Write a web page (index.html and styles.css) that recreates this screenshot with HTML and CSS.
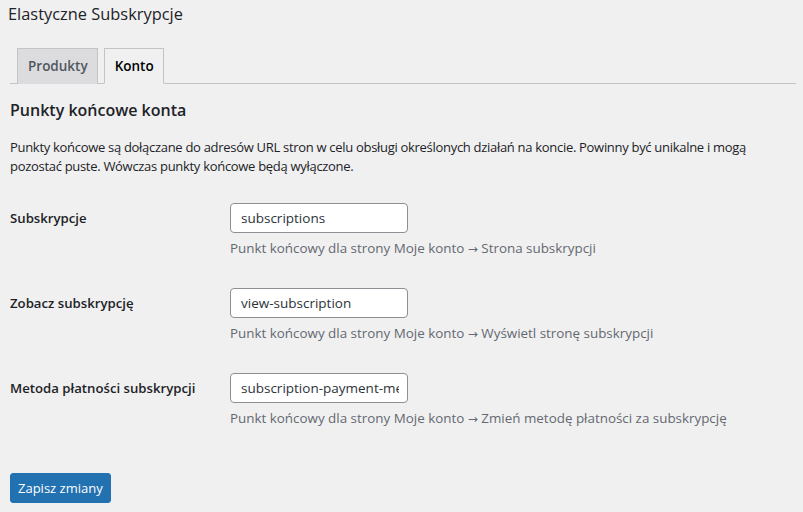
FILE: index.html
```html
<!DOCTYPE html>
<html lang="pl">
<head>
    <meta charset="UTF-8">
    <meta name="viewport" content="width=device-width, initial-scale=1.0">
    <title>Elastyczne Subskrypcje</title>
    <link rel="stylesheet" href="styles.css">
</head>
<body>

    <div class="wrap">
        <h1 class="tytul">Elastyczne Subskrypcje</h1>

        <nav class="zakladki">
            <a class="zakladka" href="#">Produkty</a>
            <a class="zakladka aktywna" href="#">Konto</a>
        </nav>

        <h2 class="sekcja">Punkty końcowe konta</h2>
        <p class="opis">Punkty końcowe są dołączane do adresów URL stron w celu obsługi określonych działań na koncie. Powinny być unikalne i mogą pozostać puste. Wówczas punkty końcowe będą wyłączone.</p>

        <div class="formularz">
            <!-- Subskrypcje -->
            <div class="wiersz">
                <label class="etykieta" for="subskrypcje">Subskrypcje</label>
                <div class="pole">
                    <input type="text" id="subskrypcje" value="subscriptions">
                    <p class="podpowiedz">Punkt końcowy dla strony Moje konto <span class="strzalka">→</span> Strona subskrypcji</p>
                </div>
            </div>

            <!-- Zobacz subskrypcję -->
            <div class="wiersz">
                <label class="etykieta" for="zobacz">Zobacz subskrypcję</label>
                <div class="pole">
                    <input type="text" id="zobacz" value="view-subscription">
                    <p class="podpowiedz">Punkt końcowy dla strony Moje konto <span class="strzalka">→</span> Wyświetl stronę subskrypcji</p>
                </div>
            </div>

            <!-- Metoda płatności -->
            <div class="wiersz">
                <label class="etykieta" for="metoda">Metoda płatności subskrypcji</label>
                <div class="pole">
                    <input type="text" id="metoda" value="subscription-payment-method">
                    <p class="podpowiedz">Punkt końcowy dla strony Moje konto <span class="strzalka">→</span> Zmień metodę płatności za subskrypcję</p>
                </div>
            </div>
        </div>

        <button class="boton">Zapisz zmiany</button>
    </div>

</body>
</html>
```

FILE: styles.css
```css
body {
    font-family: 'Open Sans', 'Noto Sans', sans-serif;
    background-color: #f0f0f1;
    color: #1d2327;
    font-size: 13px;
    margin: 0;
}

.wrap {
    padding: 0 7px 0 10px;
}

.tytul {
    font-size: 16.4px;
    font-weight: 400;
    margin: 0;
    padding-top: 3px;
    line-height: 22px;
    margin-left: -2px;
}

.zakladki {
    display: flex;
    margin-top: 23px;
    padding-left: 7px;
    border-bottom: 1px solid #c3c4c7;
    height: 35px;
}

.zakladka {
    display: block;
    box-sizing: border-box;
    height: 36px;
    padding: 0 9px 0 10px;
    margin-right: 6px;
    line-height: 34px;
    font-size: 13.5px;
    font-weight: 600;
    color: #50575e;
    background-color: #dcdcde;
    border: 1px solid #c3c4c7;
    border-bottom: none;
    text-decoration: none;
}

.zakladka.aktywna {
    background-color: #f0f0f1;
    color: #000;
    border-bottom: 1px solid #f0f0f1;
}

.sekcja {
    font-size: 16px;
    font-weight: 600;
    margin: 15px 0 0;
    line-height: 22px;
}

.opis {
    margin: 17px 0 0;
    line-height: 19px;
    letter-spacing: -0.3px;
}

.formularz {
    margin-top: 11px;
}

.wiersz {
    display: flex;
    height: 85px;
    padding-top: 16px;
    box-sizing: border-box;
}

.etykieta {
    width: 220px;
    font-size: 13.2px;
    font-weight: 600;
    line-height: 28px;
    padding-top: 1px;
}

input {
    box-sizing: border-box;
    width: 178px;
    height: 30px;
    padding: 0 8px 0 10px;
    font-family: inherit;
    font-size: 13.5px;
    color: #2c3338;
    background-color: #fff;
    border: 1px solid #8c8f94;
    border-radius: 4px;
    outline: none;
}

.podpowiedz {
    margin: 6px 0 0;
    font-size: 13.4px;
    color: #646970;
    line-height: 19px;
}

.strzalka {
    font-family: 'DejaVu Sans', sans-serif;
    font-size: 12px;
}

.boton {
    margin-top: 31px;
    height: 30px;
    padding: 0 7px;
    font-family: inherit;
    font-size: 13px;
    color: #fff;
    background-color: #2271b1;
    border: 1px solid #2271b1;
    border-radius: 3px;
    cursor: pointer;
}
```
